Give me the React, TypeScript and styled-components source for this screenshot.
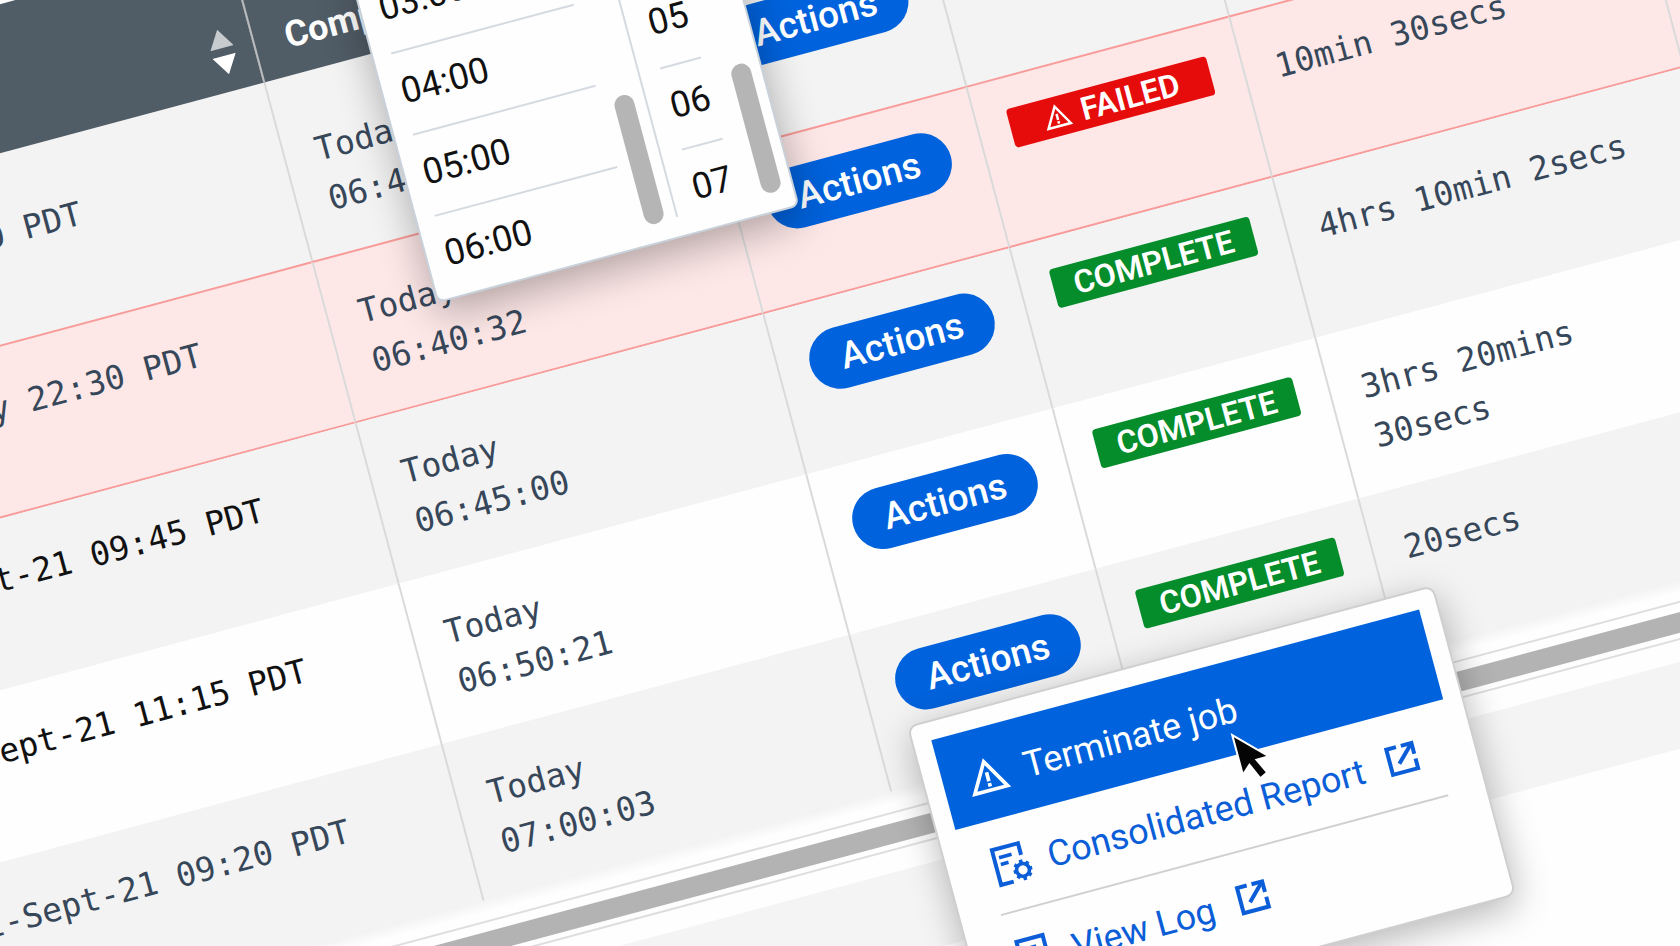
import React from 'react';
import styled, { createGlobalStyle, css } from 'styled-components';
import { MdWarningAmber } from 'react-icons/md';

const SANS = "Roboto, 'Liberation Sans', sans-serif";
const MONO = "'DejaVu Sans Mono', 'Liberation Mono', monospace";

const GlobalStyle = createGlobalStyle`
  *, *::before, *::after { box-sizing: border-box; }
  body { margin: 0; background: #fefefe; font-family: ${SANS}; }
`;

const Viewport = styled.main`
  height: 100vh;
  overflow: hidden;
`;

const Board = styled.div`
  width: 2400px;
  margin-left: -314px;
  padding-top: 4px;
  transform: rotate(-15deg);
  transform-origin: 314px 0;
`;

const JobTable = styled.table`
  width: 100%;
  table-layout: fixed;
  border-collapse: separate;
  border-spacing: 0;
  text-align: left;
`;

const Col = styled.col<{ $w?: number }>`
  width: ${(p) => (p.$w ? `${p.$w}px` : 'auto')};
`;

const HeadCell = styled.th`
  position: relative;
  height: 144px;
  padding: 0 19px 17px 31px;
  border-left: 2px solid #b9bbbd;
  background: #505c66;
  color: #fff;
  font-size: 36px;
  font-weight: 700;
  line-height: 44px;
  vertical-align: bottom;
  z-index: 2;
`;

const HeadLabel = styled.div`
  display: flex;
  align-items: center;
  justify-content: space-between;
`;

const SortButton = styled.button`
  display: flex;
  padding: 0;
  border: 0;
  background: none;
`;

const BodyCell = styled.td`
  height: 166px;
  padding: 34px 36px 28px 31px;
  border-left: 2px solid #dadada;
  color: #37475a;
  font-family: ${MONO};
  font-size: 33px;
  line-height: 51px;
  vertical-align: top;

  &:first-child {
    padding-left: 37px;
  }
`;

const ControlCell = styled(BodyCell)`
  padding: 31px 16px 0 31px;
  line-height: 0;
`;

type Tone = 'grey' | 'white' | 'failed';

const BodyRow = styled.tr<{ $tone: Tone; $first?: boolean; $strong?: boolean }>`
  background: ${(p) => ({ grey: '#f3f3f3', white: '#fefefe', failed: '#fde7e7' })[p.$tone]};

  ${(p) =>
    p.$tone === 'failed' &&
    css`
      & > td {
        border-top: 2px solid #f79c9a;
        border-bottom: 2px solid #f79c9a;
      }
    `}

  ${(p) =>
    p.$first &&
    css`
      & > td {
        height: 185px;
        padding-top: 53px;
      }
      & > ${ControlCell} {
        padding-top: 50px;
      }
    `}

  ${(p) =>
    p.$strong &&
    css`
      & > td:first-child {
        color: #111;
      }
    `}
`;

const ActionsAnchor = styled.div`
  position: relative;
  width: 190px;
`;

const ActionsButton = styled.button`
  width: 100%;
  height: 62px;
  padding: 0;
  border: 0;
  border-radius: 31px;
  background: #0062dc;
  color: #fff;
  font-family: ${SANS};
  font-size: 37px;
  font-weight: 500;
  line-height: 42px;
`;

const Badge = styled.span<{ $failed?: boolean }>`
  display: flex;
  align-items: center;
  justify-content: center;
  gap: 10px;
  width: 207px;
  height: 40px;
  border-radius: 4px;
  background: ${(p) => (p.$failed ? '#e60c0c' : '#058c2b')};
  color: #fff;
  font-family: ${SANS};
  font-size: 32px;
  font-weight: 600;
  line-height: 40px;
`;

const Menu = styled.div`
  position: absolute;
  top: 72px;
  left: 0;
  z-index: 3;
  width: 545px;
  padding: 18px;
  border: 2px solid #cfcfcf;
  border-radius: 10px;
  background: #fefefe;
  box-shadow: 0 10px 36px rgba(0, 0, 0, 0.28);
`;

const menuItem = css`
  display: flex;
  align-items: center;
  gap: 16px;
  width: 100%;
  height: 93px;
  border: 0;
  font-family: ${SANS};
  font-size: 36px;
  font-weight: 400;
  line-height: 44px;
`;

const TerminateItem = styled.button`
  ${menuItem}
  padding: 4px 23px 0;
  background: #0062dc;
  color: #fff;
`;

const MenuLink = styled.a`
  ${menuItem}
  padding: 0 23px;
  background: transparent;
  color: #0b5ed7;
  text-decoration: none;
`;

const LinkText = styled.span`
  padding: 4px 8px 0 0;
`;

const Divider = styled.hr`
  height: 2px;
  margin: 0 20px 0 22px;
  border: 0;
  background: #d0d0d0;
`;

const Pointer = styled.svg`
  position: absolute;
  top: 88px;
  left: 306px;
`;

const TimePicker = styled.div`
  position: absolute;
  top: 66px;
  left: 109px;
  display: flex;
  align-items: flex-end;
  width: 375px;
  height: 336px;
  padding: 0 10px 0 18px;
  border: 2px solid #c9d1da;
  border-radius: 8px;
  background: #fefefe;
  box-shadow: 0 12px 40px rgba(0, 0, 0, 0.3);
`;

const TimeList = styled.ul<{ $w: number }>`
  width: ${(p) => p.$w}px;
  margin: 0;
  padding: 0;
  list-style: none;
`;

const TimeOption = styled.li`
  height: 84px;

  & + & {
    border-top: 2px solid #d5dae1;
  }
`;

const TimeButton = styled.button`
  display: block;
  padding: 17px 0 0;
  border: 0;
  background: none;
  color: #111;
  font-family: ${SANS};
  font-size: 36px;
  line-height: 44px;
`;

const PickerThumb = styled.span<{ $gap: number }>`
  width: 20px;
  height: 133px;
  margin: 0 0 18px ${(p) => p.$gap}px;
  border-radius: 10px;
  background: #b5b5b5;
`;

const PickerRule = styled.span`
  align-self: stretch;
  width: 2px;
  margin: 0 21px 19px 11px;
  background: #d5dae1;
`;

const TableFade = styled.div`
  height: 20px;
  margin-top: -4px;
  background: linear-gradient(#f3f3f3, #fefefe 60%);
`;

const ScrollTrack = styled.div`
  height: 38px;
  padding: 9px 0 5px;
  border-top: 2px solid #dedede;
  border-bottom: 2px solid #dedede;
`;

const ScrollThumb = styled.div`
  height: 20px;
  background: #b3b3b3;
`;

const FooterBand = styled.div`
  height: 84px;
  margin-top: 21px;
  background: #f4f4f4;
`;

const SortIcon = () => (
  <svg width="24" height="46" viewBox="0 0 24 46" aria-hidden="true">
    <path d="M12 0 24 19H0Z" fill="#c9cccf" />
    <path d="M0 27H24L12 46Z" fill="#fff" />
  </svg>
);

const ReportIcon = () => (
  <svg width="44" height="44" viewBox="0 0 44 44" fill="none" stroke="currentColor" aria-hidden="true">
    <path d="M34 16V4H7V40H20" strokeWidth="4" />
    <path d="M12 13H25M12 20H20" strokeWidth="3.6" />
    <circle cx="32" cy="31" r="6.4" strokeWidth="3.6" />
    <path
      d="M32 20.5V25M32 37V41.5M41.5 31H38M26 31H22.5M25 24 28 27M36 35 39 38M25 38 28 35M36 27 39 24"
      strokeWidth="3.6"
    />
  </svg>
);

const OpenIcon = () => (
  <svg width="32" height="32" viewBox="0 0 32 32" fill="none" stroke="currentColor" strokeWidth="4" aria-hidden="true">
    <path d="M13 3H3V29H29V19" />
    <path d="M18 3H29V14" />
    <path d="M28 4 12 20" />
  </svg>
);

type Job = {
  started: string;
  completed: string;
  status?: 'FAILED' | 'COMPLETE';
  duration?: string;
  tone: Tone;
  strong?: boolean;
};

const jobs: Job[] = [
  { started: 'Today 12:30 PDT', completed: '06:40:12', tone: 'grey' },
  { started: 'Yesterday 22:30 PDT', completed: '06:40:32', status: 'FAILED', duration: '10min 30secs', tone: 'failed' },
  { started: '14-Sept-21 09:45 PDT', completed: '06:45:00', status: 'COMPLETE', duration: '4hrs 10min 2secs', tone: 'grey', strong: true },
  { started: '13-Sept-21 11:15 PDT', completed: '06:50:21', status: 'COMPLETE', duration: '3hrs 20mins 30secs', tone: 'white', strong: true },
  { started: '12-Sept-21 09:20 PDT', completed: '07:00:03', status: 'COMPLETE', duration: '20secs', tone: 'grey' },
];

const hours = ['03:00', '04:00', '05:00', '06:00'];
const minutes = ['05', '06', '07'];

const Times = ({ values, width }: { values: string[]; width: number }) => (
  <TimeList $w={width}>
    {values.map((value) => (
      <TimeOption key={value}>
        <TimeButton type="button">{value}</TimeButton>
      </TimeOption>
    ))}
  </TimeList>
);

const ActionsMenu = () => (
  <Menu>
    <TerminateItem type="button">
      <MdWarningAmber size={44} aria-hidden="true" />
      Terminate job
    </TerminateItem>
    <MenuLink href="#report">
      <ReportIcon />
      <LinkText>Consolidated Report</LinkText>
      <OpenIcon />
    </MenuLink>
    <Divider />
    <MenuLink href="#log">
      <ReportIcon />
      <LinkText>View Log</LinkText>
      <OpenIcon />
    </MenuLink>
    <Pointer width="40" height="56" viewBox="0 0 40 56" aria-hidden="true">
      <path d="M4 3V44L13 36L20 52L28 48L21 33H34Z" fill="#050505" stroke="#fff" strokeWidth="2" />
    </Pointer>
  </Menu>
);

export default function App() {
  return (
    <>
      <GlobalStyle />
      <Viewport>
        <Board>
          <JobTable>
            <colgroup>
              <Col $w={547} />
              <Col $w={422} />
              <Col $w={255} />
              <Col $w={272} />
              <Col $w={426} />
              <Col />
            </colgroup>
            <thead>
              <tr>
                <HeadCell>
                  <HeadLabel>
                    Started
                    <SortButton type="button" aria-label="Sort by start time">
                      <SortIcon />
                    </SortButton>
                  </HeadLabel>
                </HeadCell>
                <HeadCell>
                  Completed
                  <TimePicker>
                    <Times values={hours} width={190} />
                    <PickerThumb $gap={13} />
                    <PickerRule />
                    <Times values={minutes} width={42} />
                    <PickerThumb $gap={25} />
                  </TimePicker>
                </HeadCell>
                <HeadCell />
                <HeadCell />
                <HeadCell />
                <HeadCell />
              </tr>
            </thead>
            <tbody>
              {jobs.map((job, i) => (
                <BodyRow key={job.completed} $tone={job.tone} $first={i === 0} $strong={job.strong}>
                  <BodyCell>{job.started}</BodyCell>
                  <BodyCell>
                    Today
                    <br />
                    {job.completed}
                  </BodyCell>
                  <ControlCell>
                    <ActionsAnchor>
                      <ActionsButton type="button">Actions</ActionsButton>
                      {i === jobs.length - 1 && <ActionsMenu />}
                    </ActionsAnchor>
                  </ControlCell>
                  <ControlCell>
                    {job.status && (
                      <Badge $failed={job.status === 'FAILED'}>
                        {job.status === 'FAILED' && <MdWarningAmber size={30} aria-hidden="true" />}
                        {job.status}
                      </Badge>
                    )}
                  </ControlCell>
                  <BodyCell>{job.duration}</BodyCell>
                  <BodyCell />
                </BodyRow>
              ))}
            </tbody>
          </JobTable>
          <TableFade />
          <ScrollTrack>
            <ScrollThumb />
          </ScrollTrack>
          <FooterBand />
        </Board>
      </Viewport>
    </>
  );
}
